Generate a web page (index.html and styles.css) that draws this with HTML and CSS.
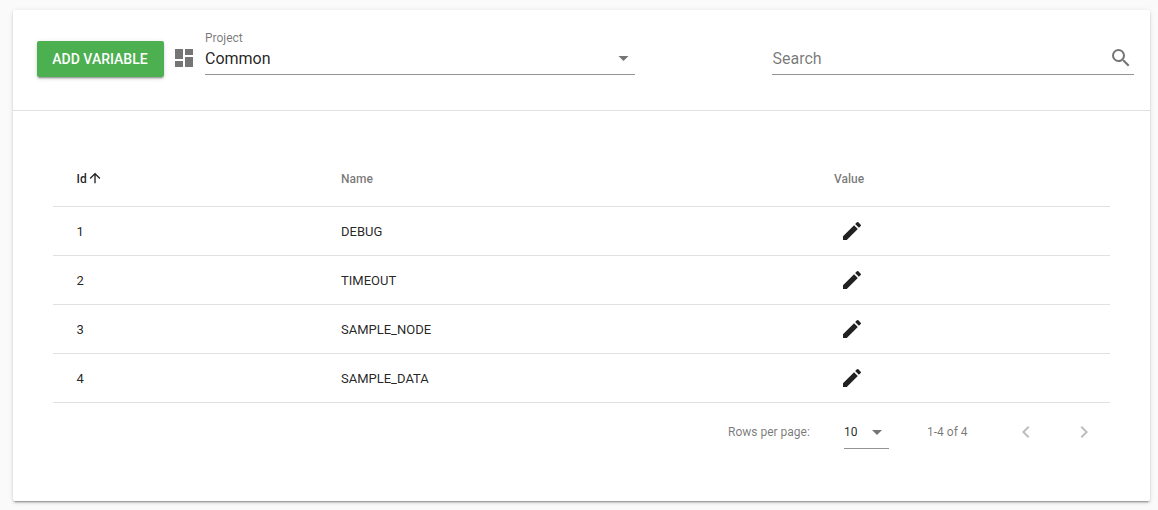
FILE: index.html
```html
<!DOCTYPE html>
<html lang="en">
<head>
<meta charset="utf-8">
<title>Variables</title>
<link rel="stylesheet" href="styles.css">
</head>
<body>
<main class="card">
  <header class="toolbar">
    <button class="add">ADD VARIABLE</button>
    <svg class="icon dash" viewBox="0 0 24 24"><path d="M3 13h8V3H3v10zm0 8h8v-6H3v6zm10 0h8V11h-8v10zm0-18v6h8V3h-8z"/></svg>
    <div class="field project">
      <span class="label">Project</span>
      <div class="control"><span>Common</span><svg class="icon" viewBox="0 0 24 24"><path d="M7.5 10l5 5 5-5z"/></svg></div>
    </div>
    <div class="field search">
      <div class="control"><span class="hint">Search</span><svg class="icon" viewBox="0 0 24 24"><path d="M15.5 14h-.79l-.28-.27A6.471 6.471 0 0 0 16 9.5 6.5 6.5 0 1 0 9.5 16c1.61 0 3.09-.59 4.23-1.57l.27.28v.79l5 4.99L20.49 19l-4.99-5zm-6 0C7.01 14 5 11.99 5 9.5S7.01 5 9.5 5 14 7.01 14 9.5 11.99 14 9.5 14z"/></svg></div>
    </div>
  </header>
  <section class="content">
    <div class="row head"><span class="sorted">Id<svg class="icon arrow" viewBox="0 0 24 24"><path d="M4 12l1.41 1.41L11 7.83V20h2V7.83l5.58 5.59L20 12l-8-8-8 8z"/></svg></span><span>Name</span><span>Value</span></div>
    <div class="row"><span>1</span><span>DEBUG</span><svg class="icon edit" viewBox="0 0 24 24"><path d="M3 17.25V21h3.75L17.81 9.94l-3.75-3.75L3 17.25zM20.71 7.04a1 1 0 0 0 0-1.41l-2.34-2.34a1 1 0 0 0-1.41 0l-1.83 1.83 3.75 3.75 1.83-1.83z"/></svg></div>
    <div class="row"><span>2</span><span>TIMEOUT</span><svg class="icon edit" viewBox="0 0 24 24"><path d="M3 17.25V21h3.75L17.81 9.94l-3.75-3.75L3 17.25zM20.71 7.04a1 1 0 0 0 0-1.41l-2.34-2.34a1 1 0 0 0-1.41 0l-1.83 1.83 3.75 3.75 1.83-1.83z"/></svg></div>
    <div class="row"><span>3</span><span>SAMPLE_NODE</span><svg class="icon edit" viewBox="0 0 24 24"><path d="M3 17.25V21h3.75L17.81 9.94l-3.75-3.75L3 17.25zM20.71 7.04a1 1 0 0 0 0-1.41l-2.34-2.34a1 1 0 0 0-1.41 0l-1.83 1.83 3.75 3.75 1.83-1.83z"/></svg></div>
    <div class="row"><span>4</span><span>SAMPLE_DATA</span><svg class="icon edit" viewBox="0 0 24 24"><path d="M3 17.25V21h3.75L17.81 9.94l-3.75-3.75L3 17.25zM20.71 7.04a1 1 0 0 0 0-1.41l-2.34-2.34a1 1 0 0 0-1.41 0l-1.83 1.83 3.75 3.75 1.83-1.83z"/></svg></div>
    <footer class="pager">
      <span class="rows-label">Rows per page:</span>
      <div class="page-size"><span>10</span><svg class="icon" viewBox="0 0 24 24"><path d="M7 10l5 5 5-5z"/></svg></div>
      <span class="range">1-4 of 4</span>
      <svg class="icon nav" viewBox="0 0 24 24"><path d="M15.41 7.41L14 6l-6 6 6 6 1.41-1.41L10.83 12z"/></svg>
      <svg class="icon nav" viewBox="0 0 24 24"><path d="M10 6L8.59 7.41 13.17 12l-4.58 4.59L10 18l6-6z"/></svg>
    </footer>
  </section>
</main>
</body>
</html>
```
FILE: styles.css
```css
* { box-sizing: border-box; }
body {
  margin: 0;
  padding: 10px 8px 9px 13px;
  height: 510px;
  background: #fafafa;
  color: rgba(0,0,0,.87);
  font-family: Roboto, sans-serif;
  overflow: hidden;
}
.card {
  height: 491px;
  background: #fff;
  border-radius: 2px;
  box-shadow: 0 3px 1px -2px rgba(0,0,0,.2), 0 2px 2px 0 rgba(0,0,0,.14), 0 1px 5px 0 rgba(0,0,0,.12);
}
.icon { display: block; flex: none; width: 24px; height: 24px; fill: rgba(0,0,0,.54); }
.toolbar {
  display: flex;
  align-items: flex-start;
  height: 101px;
  padding: 20px 16px 0 24px;
  border-bottom: 1px solid #e0e0e0;
}
.add {
  width: 127px;
  height: 36px;
  margin-top: 11px;
  padding: 0 1px 0 0;
  border: 0;
  border-radius: 2px;
  background: #4caf50;
  color: #fff;
  font: 500 14px Roboto, sans-serif;
  box-shadow: 0 3px 1px -2px rgba(0,0,0,.2), 0 2px 2px 0 rgba(0,0,0,.14), 0 1px 5px 0 rgba(0,0,0,.12);
}
.dash { margin: 16px 9.3px 0 7.7px; }
.field { display: flex; flex-direction: column; }
.project { width: 430px; }
.search { width: 362px; margin: 16px 0 0 137px; }
.label { height: 16px; font-size: 12px; line-height: 16px; color: rgba(0,0,0,.54); }
.control {
  display: flex;
  align-items: center;
  justify-content: space-between;
  height: 29px;
  padding-bottom: 4px;
  border-bottom: 1px solid #949494;
  font-size: 16px;
}
.search .control { padding-right: 1px; }
.hint { padding-left: .5px; color: rgba(0,0,0,.54); }
.content { padding: 40px 40px 0; }
.row {
  display: grid;
  grid-template-columns: 264.4px 493px 1fr;
  align-items: center;
  height: 49px;
  padding-left: 23.6px;
  border-bottom: 1px solid #e0e0e0;
  font-size: 13px;
}
.head { height: 56px; font-size: 12px; font-weight: 500; color: rgba(0,0,0,.54); }
.sorted { display: flex; align-items: center; color: rgba(0,0,0,.87); }
.arrow { width: 16px; height: 16px; margin-bottom: 1px; fill: rgba(0,0,0,.87); }
.edit { margin-left: 5.7px; fill: rgba(0,0,0,.87); }
.pager {
  display: flex;
  align-items: center;
  height: 58px;
  padding-left: 675px;
  font-size: 12px;
  color: rgba(0,0,0,.54);
}
.rows-label { flex: none; width: 116px; }
.page-size {
  display: flex;
  flex: none;
  align-items: center;
  justify-content: space-between;
  width: 45px;
  height: 33px;
  border-bottom: 1px solid #949494;
  color: rgba(0,0,0,.87);
}
.range { flex: none; width: 86.7px; margin-left: 38px; }
.nav { fill: rgba(0,0,0,.26); }
.nav + .nav { margin-left: 34px; }
```
